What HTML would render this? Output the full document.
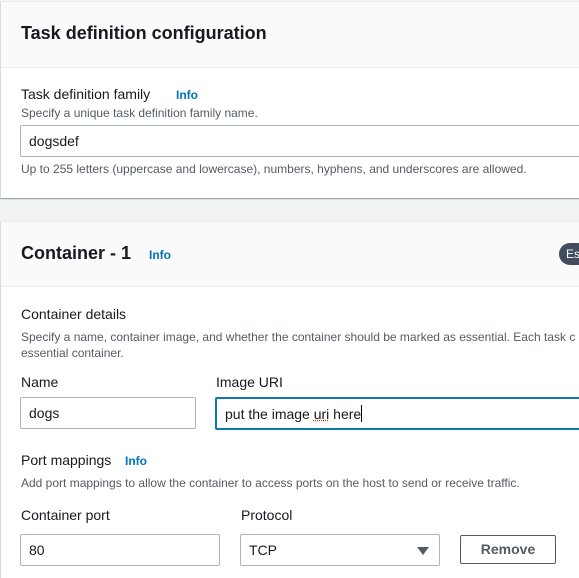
<!DOCTYPE html>
<html style="overflow:hidden;height:578px"><head><style>
body{margin:0;width:579px;height:578px;background:#f2f3f3;font-family:"Liberation Sans",sans-serif;position:relative;overflow:hidden;color:#16191f}
.a{position:absolute;white-space:nowrap}
.card{position:absolute;left:0;width:600px;background:#fff;border-left:1px solid #d5dbdb;border-top:1px solid #eaeded}
.hd{background:#fafafa;border-bottom:1px solid #eaeded}
.h{font-size:18px;font-weight:bold}
.lbl{font-size:14px}
.hp{font-size:12px;color:#545b64}
.info{font-size:12px;font-weight:bold;color:#0073bb}
.in{position:absolute;box-sizing:border-box;border:1px solid #aab7b8;border-radius:2px;background:#fff;font-size:14px;padding-left:8px;display:flex;align-items:center}
</style></head><body>
<div class="card" style="top:1px;height:196px;box-shadow:0 1px 1px #879596">
 <div class="hd" style="height:65px"></div>
</div>
<div class="card" style="top:221px;height:357px">
 <div class="hd" style="height:64px"></div>
</div>
<div class="a h" style="left:21px;top:23px">Task definition configuration</div>
<div class="a lbl" style="left:21px;top:86px">Task definition family</div>
<div class="a info" style="left:176px;top:88px">Info</div>
<div class="a hp" style="left:21px;top:106px">Specify a unique task definition family name.</div>
<div class="in" style="left:20px;top:125px;width:600px;height:32px">dogsdef</div>
<div class="a hp" style="left:21px;top:162px">Up to 255 letters (uppercase and lowercase), numbers, hyphens, and underscores are allowed.</div>
<div class="a h" style="left:21px;top:243px">Container - 1</div>
<div class="a info" style="left:149px;top:248px">Info</div>
<div class="a" style="left:559px;top:243px;width:60px;height:22px;border-radius:11px;background:#414d5c;color:#fff;font-size:12px;line-height:22px;padding-left:7px">Es</div>
<div class="a lbl" style="left:21px;top:306px">Container details</div>
<div class="a hp" style="left:21px;top:330px">Specify a name, container image, and whether the container should be marked as essential. Each task c</div>
<div class="a hp" style="left:21px;top:346px">essential container.</div>
<div class="a lbl" style="left:21px;top:374px">Name</div>
<div class="a lbl" style="left:216px;top:374px">Image URI</div>
<div class="in" style="left:20px;top:397px;width:176px;height:32px">dogs</div>
<div class="in" style="left:215px;top:397px;width:400px;height:33px;border:2px solid #0a7aa8;padding-left:8px;white-space:pre">put the image <span style="text-decoration:underline dotted #d13212">uri</span> here<span style="border-left:1px solid #000;height:17px"></span></div>
<div class="a lbl" style="left:21px;top:452px">Port mappings</div>
<div class="a info" style="left:125px;top:454px">Info</div>
<div class="a hp" style="left:21px;top:476px">Add port mappings to allow the container to access ports on the host to send or receive traffic.</div>
<div class="a lbl" style="left:21px;top:507px">Container port</div>
<div class="a lbl" style="left:241px;top:507px">Protocol</div>
<div class="in" style="left:20px;top:534px;width:200px;height:32px">80</div>
<div class="in" style="left:240px;top:534px;width:200px;height:32px">TCP<span style="position:absolute;right:10px;top:12px;width:0;height:0;border-left:6px solid transparent;border-right:6px solid transparent;border-top:8px solid #545b64"></span></div>
<div class="a" style="left:460px;top:535px;width:96px;height:29px;box-sizing:border-box;border:1px solid #545b64;border-radius:2px;background:#fff;font-size:14px;font-weight:bold;color:#545b64;text-align:center;line-height:27px">Remove</div>
</body></html>
